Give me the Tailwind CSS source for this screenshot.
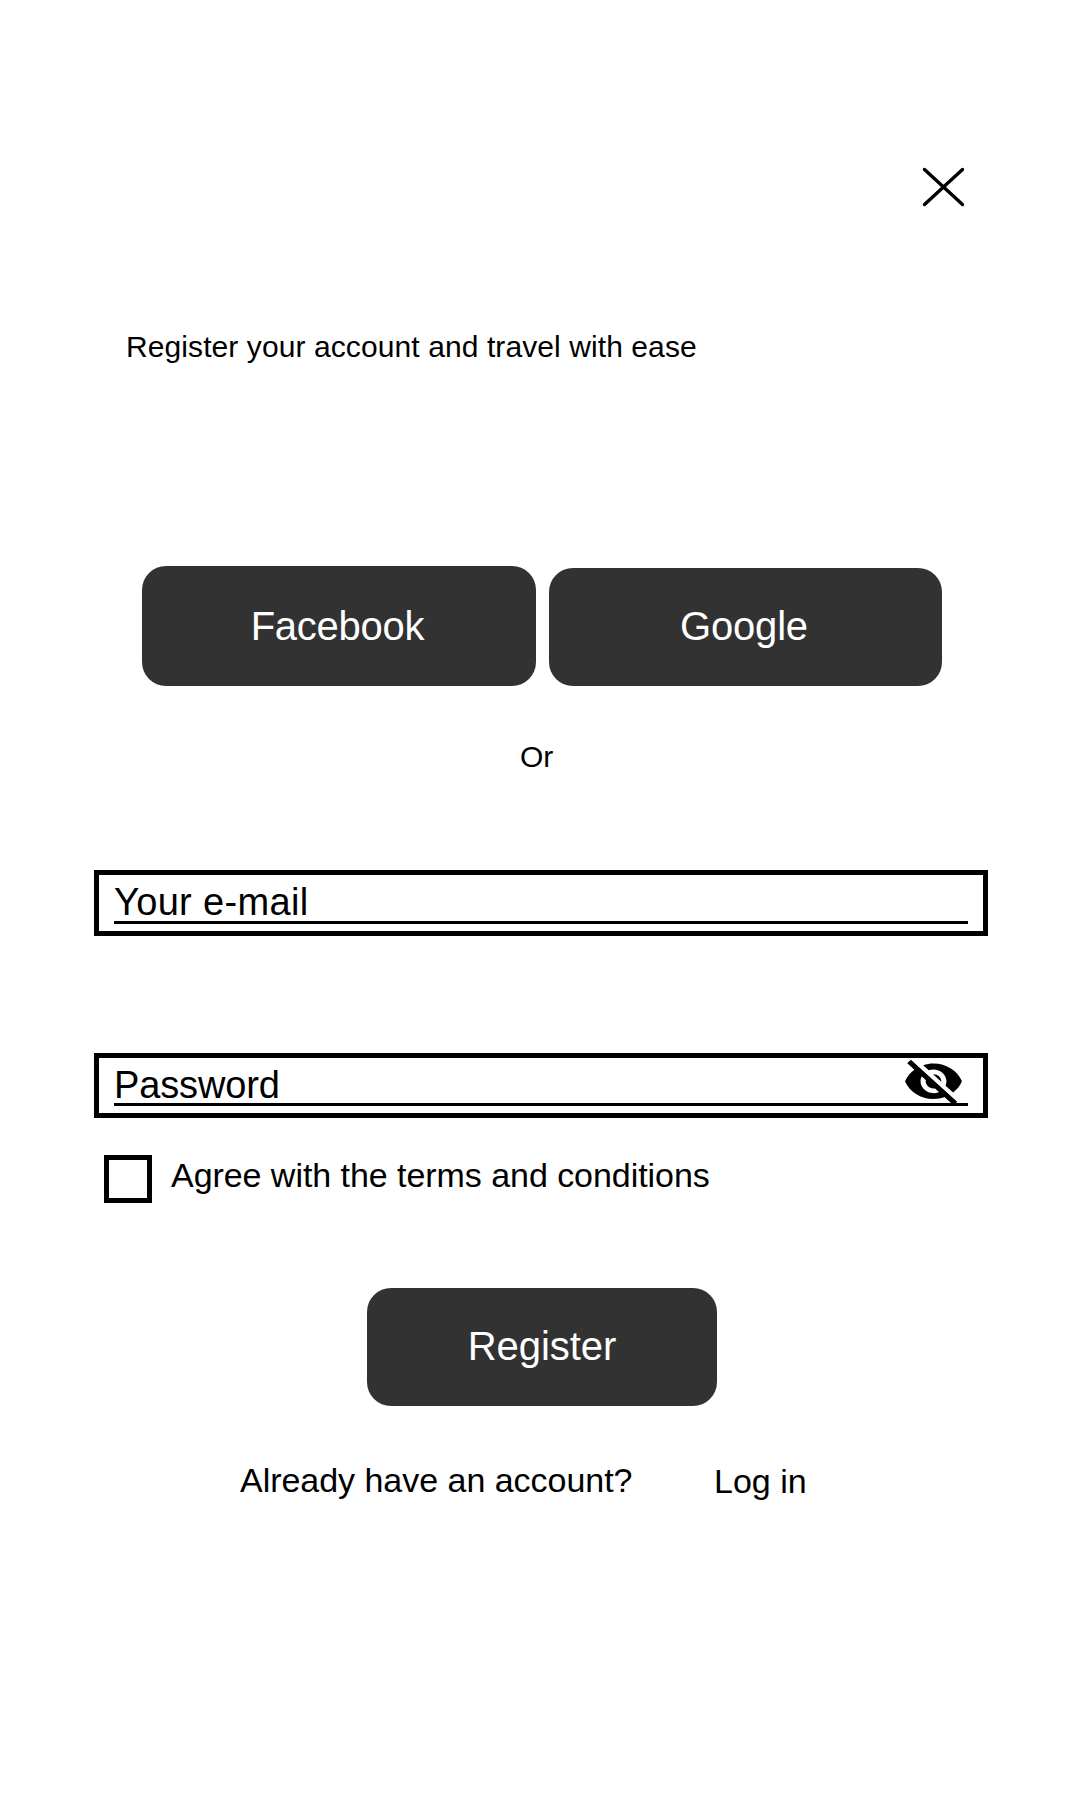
<!DOCTYPE html>
<html lang="en">
<head>
<meta charset="utf-8">
<title>Register</title>
<script src="https://cdn.jsdelivr.net/npm/@tailwindcss/browser@4"></script>
</head>
<body class="bg-white">
<main class="flex h-[1800px] w-[1080px] flex-col items-start overflow-hidden bg-white font-['Liberation_Sans',Arial,sans-serif] leading-none text-black">
  <button aria-label="Close" class="mt-[167px] ml-[922px] h-10 w-[43px]">
    <svg class="block h-10 w-[43px]" viewBox="0 0 43 40" fill="none" stroke="currentColor" stroke-width="3.4" stroke-linecap="round"><path d="M2.5 2.5 40.5 37.5M40.5 2.5 2.5 37.5"/></svg>
  </button>
  <h1 class="mt-[125px] ml-[126px] text-[30px] leading-[30px] tracking-[0.09px] whitespace-nowrap">Register your account and travel with ease</h1>
  <div class="mt-[204px] ml-[142px] flex items-end gap-[13px] text-[40px] leading-[40px] text-white">
    <button class="flex h-[120px] w-[394px] justify-center rounded-3xl bg-[#323232] pt-10 pr-[3px] tracking-[-0.25px]">Facebook</button>
    <button class="flex h-[118px] w-[393px] justify-center rounded-3xl bg-[#323232] pt-[38px] pr-[3px] tracking-[-0.2px]">Google</button>
  </div>
  <p class="mt-14 ml-[520px] text-[30px] leading-[30px]">Or</p>
  <div class="mt-[98px] ml-[94px] h-[66px] w-[894px] border-5 border-black px-[15px] pt-2">
    <div class="h-[41px] border-b-3 border-black text-[38px] leading-[38px] tracking-[0.33px]">Your e-mail</div>
  </div>
  <div class="relative mt-[117px] ml-[94px] h-[65px] w-[894px] border-5 border-black px-[15px] pt-2">
    <div class="h-10 border-b-3 border-black text-[38px] leading-[38px] tracking-[-0.12px]">Password</div>
    <svg class="absolute top-[2px] right-[21px] h-[45px] w-[57px] overflow-visible" viewBox="1 3 22 19" preserveAspectRatio="none" fill="currentColor"><path d="M12 7c2.76 0 5 2.24 5 5 0 .65-.13 1.26-.36 1.83l2.92 2.92c1.51-1.26 2.7-2.89 3.43-4.75-1.73-4.39-6-7.5-11-7.5-1.4 0-2.74.25-3.98.7l2.16 2.16C10.74 7.13 11.35 7 12 7zM2 4.27l2.28 2.28.46.46C3.08 8.3 1.78 10.02 1 12c1.73 4.39 6 7.5 11 7.5 1.55 0 3.03-.3 4.38-.84l.42.42L19.73 22 21 20.73 3.27 3 2 4.27zM7.53 9.8l1.55 1.55c-.05.21-.08.43-.08.65 0 1.66 1.34 3 3 3 .22 0 .44-.03.65-.08l1.55 1.55c-.67.33-1.41.53-2.2.53-2.76 0-5-2.24-5-5 0-.79.2-1.53.53-2.2zm4.31-.78 3.15 3.15.02-.16c0-1.66-1.34-3-3-3l-.17.01z"/><path d="M2.6 3.7 20.4 21.3" stroke="currentColor" stroke-width="2"/></svg>
  </div>
  <label class="mt-[37px] ml-[104px] flex h-12 gap-[19px] text-[34px] leading-[34px]">
    <span class="size-12 border-5 border-black"></span>
    <span class="pt-[3px] tracking-[-0.05px]">Agree with the terms and conditions</span>
  </label>
  <button class="mt-[85px] ml-[367px] flex h-[118px] w-[350px] justify-center rounded-3xl bg-[#323232] pt-[38px] text-[40px] leading-[40px] tracking-[-0.05px] text-white">Register</button>
  <div class="mt-[57px] ml-[240px] flex text-[34px] leading-[34px]">
    <span class="w-[474px] tracking-[-0.03px]">Already have an account?</span>
    <a class="pt-px">Log in</a>
  </div>
</main>
</body>
</html>
